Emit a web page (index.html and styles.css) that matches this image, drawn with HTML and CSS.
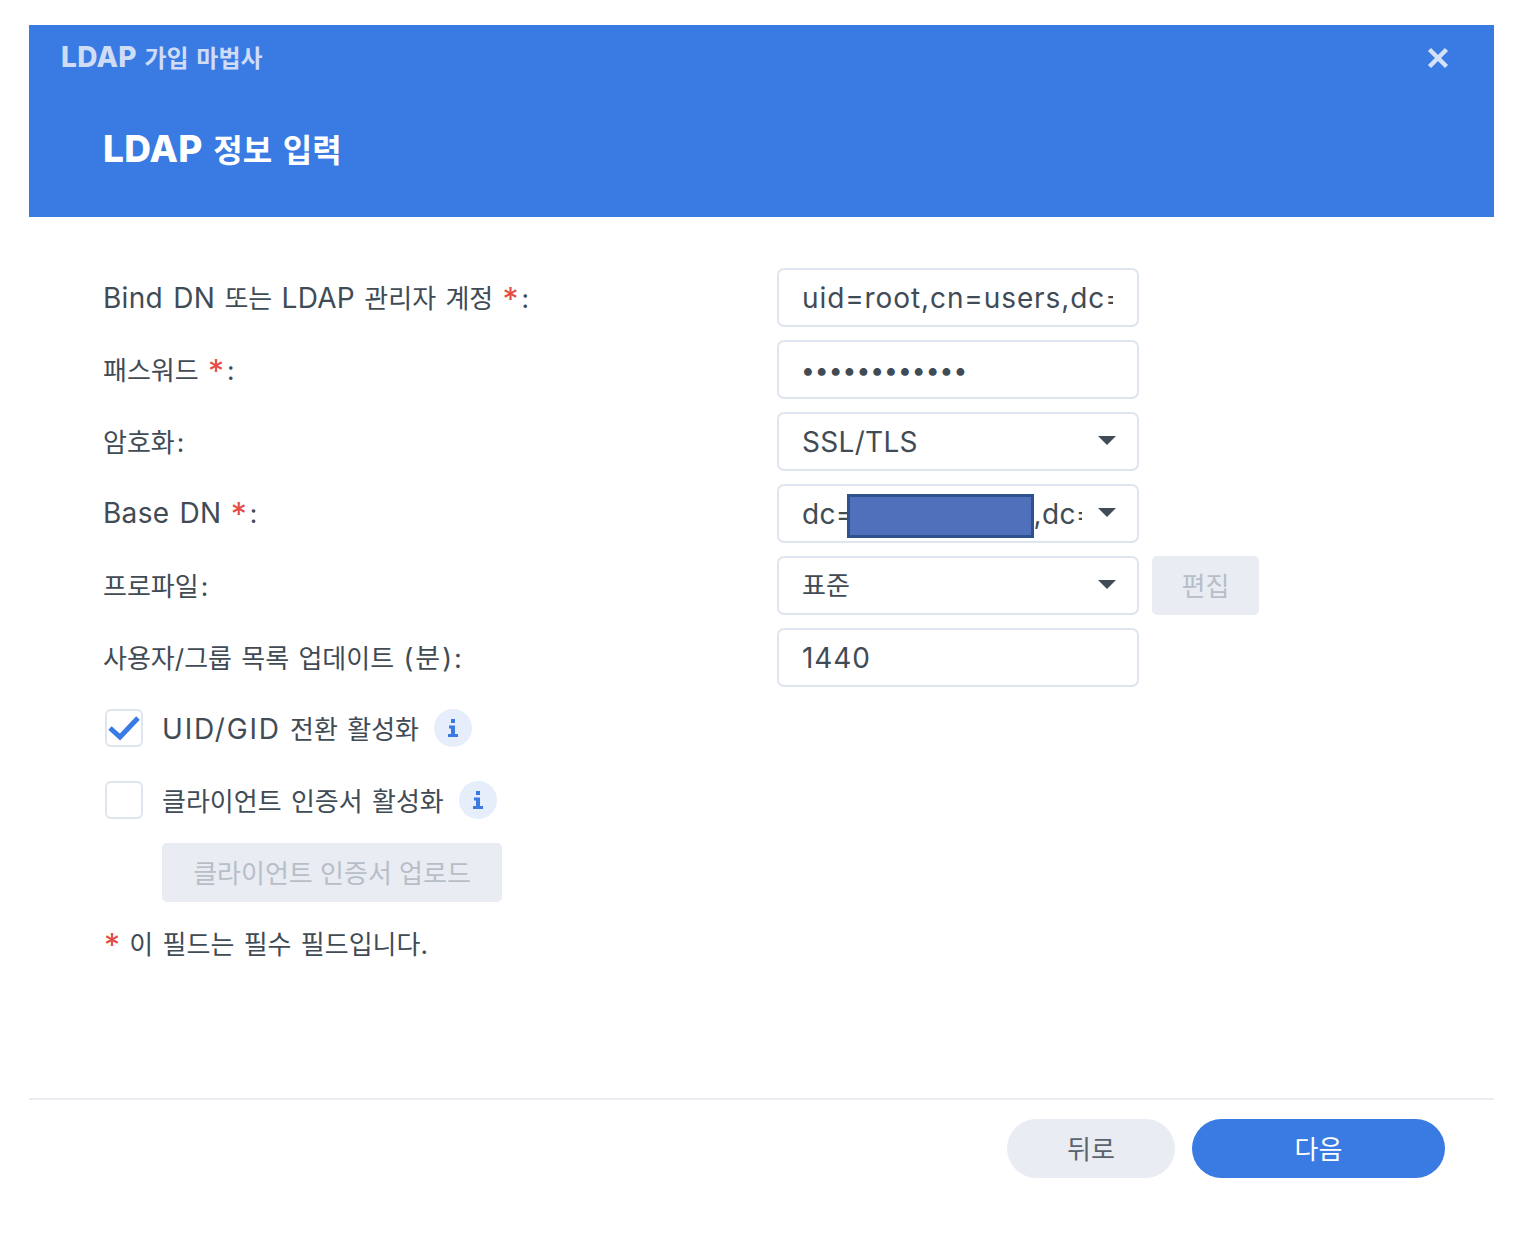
FILE: index.html
```html
<!DOCTYPE html>
<html lang="ko">

<head>
    <meta charset="UTF-8">
    <meta name="viewport" content="width=device-width, initial-scale=1.0">
    <title>LDAP 가입 마법사</title>
    <link rel="stylesheet" href="styles.css">
</head>

<body>
    <div class="wizard">
        <header class="wizard-header">
            <div class="title-bar">
                <span class="app-title"><span class="latin">LDAP</span> 가입 마법사</span>
                <button type="button" class="close-button" aria-label="닫기">
                    <svg width="24" height="24" viewBox="0 0 24 24">
                        <path d="M3.5 3.5L20.5 20.5M20.5 3.5L3.5 20.5" />
                    </svg>
                </button>
            </div>
            <h1><span class="latin">LDAP</span> 정보 입력</h1>
        </header>

        <form class="wizard-body">
            <div class="form-row">
                <label for="bindDn"><span class="latin">Bind DN</span> 또는 <span class="latin">LDAP</span> 관리자 계정 <span class="required">*</span><span class="colon">:</span></label>
                <input type="text" id="bindDn" class="field" value="uid=root,cn=users,dc=example,dc=com">
            </div>
            <div class="form-row">
                <label for="password">패스워드 <span class="required">*</span><span class="colon">:</span></label>
                <input type="password" id="password" class="field" value="************">
            </div>
            <div class="form-row">
                <label>암호화<span class="colon">:</span></label>
                <div class="field select">
                    <span class="select-value latin">SSL/TLS</span>
                    <span class="caret"></span>
                </div>
            </div>
            <div class="form-row">
                <label><span class="latin">Base DN</span> <span class="required">*</span><span class="colon">:</span></label>
                <div class="field select">
                    <span class="select-value latin">dc=<span class="redaction"></span>,dc=com</span>
                    <span class="caret"></span>
                </div>
            </div>
            <div class="form-row">
                <label>프로파일<span class="colon">:</span></label>
                <div class="field select">
                    <span class="select-value hangul">표준</span>
                    <span class="caret"></span>
                </div>
                <button type="button" class="button-disabled edit-button" disabled>편집</button>
            </div>
            <div class="form-row last-field">
                <label for="interval">사용자/그룹 목록 업데이트 <span class="latin unit">(분):</span></label>
                <input type="text" id="interval" class="field" value="1440">
            </div>

            <div class="check-row">
                <span class="checkbox">
                    <svg width="34" height="30" viewBox="0 0 34 30">
                        <path d="M3 16L13 25L31 6" />
                    </svg>
                </span>
                <span class="check-label"><span class="latin wide">UID/GID</span> 전환 활성화</span>
                <span class="info-badge">
                    <svg width="10" height="18" viewBox="0 0 10 18">
                        <path d="M3 0H7V4H3ZM1 6.5H7V15H10V18H0V15H3V9.5H1Z" />
                    </svg>
                </span>
            </div>
            <div class="check-row">
                <span class="checkbox"></span>
                <span class="check-label">클라이언트 인증서 활성화</span>
                <span class="info-badge">
                    <svg width="10" height="18" viewBox="0 0 10 18">
                        <path d="M3 0H7V4H3ZM1 6.5H7V15H10V18H0V15H3V9.5H1Z" />
                    </svg>
                </span>
            </div>
            <div class="upload-row">
                <button type="button" class="button-disabled upload-button" disabled>클라이언트 인증서 업로드</button>
            </div>
            <p class="required-note"><span class="required">*</span> 이 필드는 필수 필드입니다.</p>
        </form>

        <footer class="wizard-footer">
            <button type="button" class="pill pill-back">뒤로</button>
            <button type="button" class="pill pill-next">다음</button>
        </footer>
    </div>
</body>

</html>
```

FILE: styles.css
```css
* {
    box-sizing: border-box;
}

body {
    margin: 0;
    background-color: white;
    color: #414b55;
    font-family: Inter, "Noto Sans CJK KR", sans-serif;
    font-size: 26px;
    word-spacing: 2px;
}

/* latin runs are set larger than the hangul around them */
.latin {
    font-size: 28px;
    letter-spacing: 0.3px;
}

.wide {
    letter-spacing: 1.8px;
}

.unit {
    font-size: 27px;
    letter-spacing: 2px;
}

.colon {
    margin-left: 2px;
}

.wizard {
    width: 1465px;
    margin: 25px 0 0 29px;
}

.wizard-header {
    height: 192px;
    padding: 0 44px 0 32px;
    background-color: #397ae3;
    color: white;
}

.title-bar {
    display: flex;
    justify-content: space-between;
    align-items: center;
    height: 66px;
}

.app-title {
    margin-top: -4px;
    font-size: 24px;
    font-weight: 700;
    color: #cfdcf6;
}

.app-title .latin {
    font-weight: 800;
}

.close-button {
    display: flex;
    padding: 0;
    border: none;
    background: none;
}

.close-button path {
    fill: none;
    stroke: #d5e1f8;
    stroke-width: 4.5;
}

h1 {
    margin: 35px 0 0 42px;
    font-size: 32px;
    font-weight: 700;
    line-height: 46px;
    word-spacing: 3px;
}

h1 .latin {
    font-size: 37px;
    font-weight: 800;
}

.wizard-body {
    height: 881px;
    padding: 51px 0 0 74px;
}

.form-row {
    display: flex;
    align-items: center;
    height: 59px;
    margin-bottom: 13px;
}

.form-row.last-field {
    margin-bottom: 11px;
}

.form-row label {
    flex: 0 0 674px;
    margin-top: -2px;
}

.required {
    color: #e34b43;
    font-size: 32px;
    line-height: 0;
    vertical-align: -3px;
}

.form-row .required {
    margin-right: 1px;
}

.field {
    width: 362px;
    height: 59px;
    padding: 0 24px 0 23px;
    border: 2px solid #dfe5ee;
    border-radius: 7px;
    background-color: white;
    color: #414b55;
    font-family: inherit;
    font-size: 28px;
    letter-spacing: 0.9px;
    outline: none;
}

#password {
    font-size: 25px;
    font-weight: 700;
    letter-spacing: 2px;
}

.select {
    display: flex;
    align-items: center;
    gap: 16px;
    padding-right: 21px;
    font-size: 26px;
    letter-spacing: 0;
}

.select-value {
    flex: 1;
    display: flex;
    align-items: center;
    height: 49px;
    overflow: hidden;
    white-space: nowrap;
}

.hangul {
    padding-bottom: 4px;
}

.caret {
    flex: none;
    margin-top: -2px;
    border-top: 9px solid #414b55;
    border-left: 9px solid transparent;
    border-right: 9px solid transparent;
}

.redaction {
    flex: none;
    align-self: flex-end;
    width: 187px;
    height: 44px;
    margin-left: -8px;
    border: 3px solid #2f528f;
    background-color: #4f71bb;
}

.button-disabled {
    height: 59px;
    padding-bottom: 3px;
    border: none;
    border-radius: 5px;
    background-color: #e9ecf2;
    color: #b7bec8;
    font-family: inherit;
    font-size: 26px;
}

.edit-button {
    width: 107px;
    margin-left: 13px;
}

.check-row {
    display: flex;
    align-items: center;
    height: 59px;
    margin-bottom: 13px;
    margin-left: 2px;
}

.checkbox {
    position: relative;
    flex: none;
    width: 38px;
    height: 38px;
    border: 2px solid #dfe5ee;
    border-radius: 6px;
}

.checkbox svg {
    position: absolute;
    top: 1px;
    left: 0;
}

.checkbox path {
    fill: none;
    stroke: #397ae3;
    stroke-width: 5;
}

.check-label {
    margin-left: 19px;
}

.info-badge {
    display: flex;
    justify-content: center;
    align-items: center;
    width: 38px;
    height: 38px;
    margin-left: 15px;
    border-radius: 50%;
    background-color: #e6eefb;
}

.info-badge path {
    fill: #397ae3;
}

.upload-row {
    padding: 1px 0 0 59px;
}

.upload-button {
    width: 340px;
}

.required-note {
    margin: 13px 0 0 1px;
    line-height: 59px;
}

.wizard-footer {
    display: flex;
    justify-content: flex-end;
    gap: 17px;
    height: 100px;
    padding: 19px 49px 0 0;
    border-top: 2px solid #e9edf1;
}

.pill {
    height: 59px;
    padding-bottom: 3px;
    border: none;
    border-radius: 30px;
    font-family: inherit;
    font-size: 26px;
}

.pill-back {
    width: 168px;
    background-color: #e9ecf2;
    color: #5a636d;
}

.pill-next {
    width: 253px;
    background-color: #397ae3;
    color: white;
}
```
